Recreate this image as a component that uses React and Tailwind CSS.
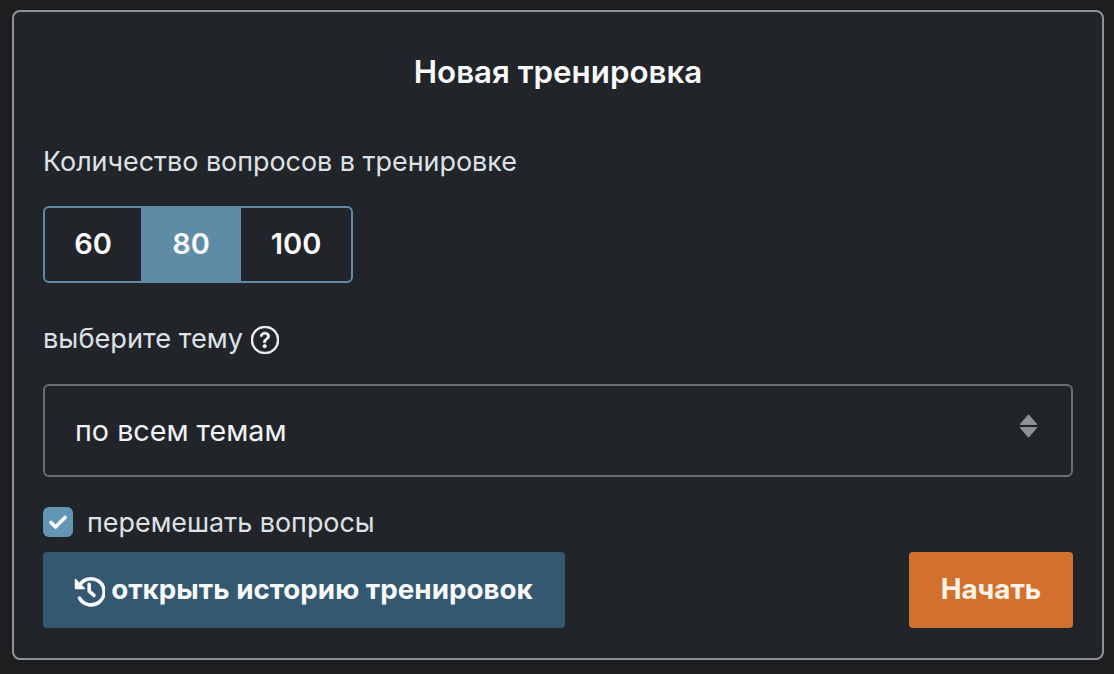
const App = () => {
    return (
        <div className="w-[1114px] h-[674px] bg-[#1c1e20] pt-[10px] pl-3 overflow-hidden font-['Inter',sans-serif]">
            <div className="w-[1092px] h-[650px] rounded-lg border-2 border-[#8f9193] bg-[#212529] px-[29px] flex flex-col">
                {/* Title */}
                <h2 className="mt-[38px] h-11 leading-[44px] text-center text-[31.3px] font-semibold text-[#f8f9fa]">
                    Новая тренировка
                </h2>

                {/* Question count */}
                <p className="mt-[47px] mb-px h-10 leading-10 text-[26.9px] text-[#dee2e6]">Количество вопросов в тренировке</p>
                <div className="mt-[24px] flex w-[310px] h-[77px] rounded-md border-2 border-[#5f8ba6] overflow-hidden text-[29px] font-semibold text-[#f8f9fa]">
                    <div className="w-[96px] pb-px flex items-center justify-center">60</div>
                    <div className="w-[100px] pb-px bg-[#5f8ba6] flex items-center justify-center">80</div>
                    <div className="flex-1 pb-px flex items-center justify-center">100</div>
                </div>

                {/* Topic */}
                <div className="mt-[36px] h-10 pt-px flex items-center gap-2 text-[27.2px] text-[#dee2e6]">
                    <span>выберите тему</span>
                    <svg width="28" height="28" viewBox="0 0 16 16" fill="currentColor" stroke="currentColor" strokeWidth="0.35" className="text-[#f8f9fa]">
                        <path d="M8 15A7 7 0 1 1 8 1a7 7 0 0 1 0 14m0 1A8 8 0 1 0 8 0a8 8 0 0 0 0 16" />
                        <path d="M5.255 5.786a.237.237 0 0 0 .241.247h.825c.138 0 .248-.113.266-.25.09-.656.54-1.134 1.342-1.134.686 0 1.314.343 1.314 1.168 0 .635-.374.927-.965 1.371-.673.489-1.206 1.06-1.168 1.987l.003.217a.25.25 0 0 0 .25.246h.811a.25.25 0 0 0 .25-.25v-.105c0-.718.273-.927 1.01-1.486.609-.463 1.244-.977 1.244-2.056 0-1.511-1.276-2.241-2.673-2.241-1.267 0-2.655.59-2.75 2.286m1.557 5.763c0 .533.425.927 1.01.927.609 0 1.028-.394 1.028-.927 0-.552-.42-.94-1.029-.94-.584 0-1.009.388-1.009.94" />
                    </svg>
                </div>
                <div className="mt-[25px] h-[93px] rounded-md border-2 border-[#6a6e72] pl-[30px] pr-[33px] flex items-center justify-between text-[28.7px] text-[#f1f3f5]">
                    <span>по всем темам</span>
                    <svg width="19" height="24" viewBox="0 0 19 24" fill="#8f9295" stroke="#8f9295" strokeWidth="1" strokeLinejoin="round" className="mb-[10px]">
                        <path d="M9.5 0.8 L17.8 10.4 H1.2 Z" />
                        <path d="M9.5 23.2 L17.8 13.6 H1.2 Z" />
                    </svg>
                </div>

                {/* Shuffle checkbox */}
                <label className="mt-[29px] h-[32px] flex items-center gap-[14px] text-[26.9px] text-[#dee2e6]">
                    <span className="w-[30px] h-[30px] rounded-md bg-[#6396b5] flex items-center justify-center">
                        <svg width="18" height="14" viewBox="0 0 18 14" fill="none" stroke="#f8f9fa" strokeWidth="3.6" strokeLinecap="round" strokeLinejoin="round">
                            <path d="M2 7.5 L6.5 12 L16 2.5" />
                        </svg>
                    </span>
                    <span>перемешать вопросы</span>
                </label>

                {/* Buttons */}
                <div className="mt-[14px] flex justify-between">
                    <button className="w-[522px] h-[76px] pr-[3px] rounded bg-[#34586f] flex items-center justify-center gap-[6px] text-[27.8px] font-bold text-[#f8f9fa]">
                        <svg width="33" height="33" viewBox="0 0 24 24" fill="none" stroke="currentColor" strokeWidth="2.6" strokeLinecap="round" strokeLinejoin="round">
                            <path d="M5 9.5 A9.5 9.5 0 1 1 5.5 17.5" />
                            <path d="M2.5 4 v6.5 h6.5 Z" fill="currentColor" strokeWidth="1" />
                            <path d="M12.5 7.5 v5 l3.5 3" />
                        </svg>
                        <span>открыть историю тренировок</span>
                    </button>
                    <button className="w-[164px] h-[76px] rounded bg-[#d2702d] text-[27.8px] font-bold text-[#fdf3e7]">
                        Начать
                    </button>
                </div>
            </div>
        </div>
    );
};

export default App;
